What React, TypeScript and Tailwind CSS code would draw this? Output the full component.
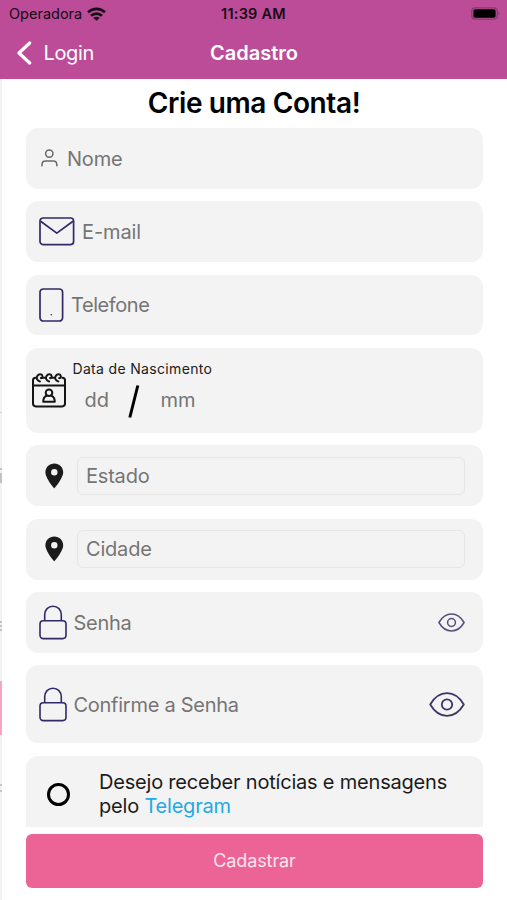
import type { ReactNode } from "react";

const NAVY = "#302a68";

function Wifi() {
  return (
    <svg width="19" height="14" viewBox="0 0 19 14" fill="none" stroke="#170b14" strokeWidth="2.6">
      <path d="M1 5.3C5.800.7 13.200.7 18 5.300" />
      <path d="M4 8.800c3.100-2.900 7.900-2.900 11 0" />
      <path d="M9.500 13.700 6.300 10.900c1.800-1.600 4.600-1.600 6.400 0Z" fill="#170b14" stroke="none" />
    </svg>
  );
}

function Battery() {
  return (
    <svg width="30" height="13" viewBox="0 0 30 13">
      <rect x="0.8" y="0.8" width="25.400" height="11.400" rx="3.400" fill="none" stroke="#843a6c" strokeWidth="1.300" />
      <rect x="2.400" y="2.300" width="22.200" height="8.400" rx="1.600" fill="#000" />
      <path d="M27.500 4.600c1.600.6 1.600 3.200 0 3.800Z" fill="#843a6c" />
    </svg>
  );
}

function Person() {
  return (
    <svg width="17" height="18" viewBox="0 0 17 18" fill="none" stroke="#6a6a6a" strokeWidth="1.500" strokeLinecap="round">
      <circle cx="8.300" cy="4.600" r="3.700" />
      <path d="M1 16.800v-1.300c0-2.200 1.400-3.500 3.600-3.500h7.600c2.200 0 3.600 1.300 3.600 3.500v1.300" />
    </svg>
  );
}

function Mail() {
  return (
    <svg width="36" height="29" viewBox="0 0 36 29" fill="none" stroke={NAVY} strokeWidth="1.700" strokeLinejoin="round">
      <rect x="1" y="1" width="33.600" height="26.600" rx="3" />
      <path d="m1.600 4.300 16.200 11.800L34 4.300" />
    </svg>
  );
}

function Phone() {
  return (
    <svg width="25" height="35" viewBox="0 0 25 35" fill="none" stroke={NAVY} strokeWidth="1.700">
      <rect x="1" y="1" width="22.600" height="32" rx="3.300" />
      <circle cx="12.300" cy="26.700" r=".8" fill={NAVY} stroke="none" />
    </svg>
  );
}

function Calendar() {
  return (
    <svg width="34" height="35" viewBox="0 0 34 35" fill="none" stroke="#151515" strokeWidth="2" strokeLinecap="round" strokeLinejoin="round">
      <path d="M4 4.800h-.4C2 4.800 1 5.800 1 7.400v23.200C1 32.400 2 33.400 3.800 33.400h26.400c1.800 0 2.800-1 2.800-2.800V7.400c0-1.600-1-2.600-2.600-2.600" />
      <path d="M1 12.500h32M10.300 4.800h3M19.500 4.800h3" />
      <path d="M8 8.400C4.800 7.800 4 5 5.400 2.900 6.800.7 10.200.8 10.500 3.300c.1 1.300-.7 2-1.700 1.800" />
      <path d="M17.200 8.400c-3.200-.6-4-3.400-2.600-5.500 1.400-2.200 4.800-2.100 5.100.4.1 1.300-.7 2-1.700 1.800" />
      <path d="M26.400 8.400c-3.200-.6-4-3.400-2.600-5.500 1.400-2.200 4.800-2.100 5.100.4.1 1.300-.7 2-1.700 1.800" />
      <circle cx="17" cy="19.700" r="3.300" />
      <path d="M14.800 22.500c-2.300 1-3.600 3.200-3.600 6.300h11.600c0-3.100-1.300-5.300-3.600-6.300" />
    </svg>
  );
}

function Pin() {
  return (
    <svg width="19" height="26" viewBox="0 0 19 26">
      <path fillRule="evenodd" fill="#1b1b1b" d="M9.300.4C4.300.4.400 4.200.400 9.200c0 6.100 8.900 16.300 8.900 16.300s8.900-10.200 8.900-16.300c0-5-3.900-8.800-8.900-8.800Zm0 5.600a3.200 3.200 0 1 1 0 6.400 3.200 3.200 0 0 1 0-6.400Z" />
    </svg>
  );
}

function Lock() {
  return (
    <svg width="28" height="35" viewBox="0 0 28 35" fill="none" stroke={NAVY} strokeWidth="1.600">
      <rect x="1" y="15.800" width="26" height="17.800" rx="3.300" />
      <path d="M5.700 15.800V9.800C5.700 4.800 9.200 1.200 14 1.200s8.300 3.600 8.300 8.600v6" />
    </svg>
  );
}

function Eye({ big }: { big?: boolean }) {
  return (
    <svg width={big ? 36 : 27} height={big ? 25 : 19} viewBox="0 0 36 25" fill="none" stroke={big ? "#3b3568" : "#554f7c"} strokeWidth={big ? 1.800 : 2} strokeLinejoin="round">
      <path d="M1.200 12.500C5.300 5.500 10.900 1.200 18 1.200s12.700 4.300 16.800 11.300C30.700 19.500 25.100 23.800 18 23.800S5.300 19.500 1.200 12.500Z" />
      <circle cx="18" cy="12.500" r="5.200" />
    </svg>
  );
}

function Card({ className, children }: { className: string; children: ReactNode }) {
  return <div className={`flex shrink-0 items-center rounded-[12px] bg-[#f3f3f3] ${className}`}>{children}</div>;
}

function Hint({ className, children }: { className: string; children: ReactNode }) {
  return <span className={`whitespace-nowrap text-[20px] leading-[24px] text-[#757575] ${className}`}>{children}</span>;
}

export default function App() {
  return (
    <div className="flex h-[900px] w-[507px] flex-col overflow-hidden bg-white font-['Inter','Liberation_Sans',sans-serif]">
      <header className="h-[79px] shrink-0 bg-[#bc4c98]">
        <div className="grid h-[27px] grid-cols-3 items-center px-[7px] text-[#170b14]">
          <div className="flex items-center gap-[5px] pl-[2px]">
            <span className="text-[14.500px] leading-[18px]">Operadora</span>
            <Wifi />
          </div>
          <span className="text-center text-[14.500px] font-semibold leading-[18px] tracking-[0.250px]">11:39 AM</span>
          <div className="-mr-px flex justify-end"><Battery /></div>
        </div>
        <div className="grid h-[51px] grid-cols-3 items-center px-[16px] text-white">
          <div className="flex items-center gap-[11.500px]">
            <svg width="16" height="24" viewBox="0 0 16 24" fill="none" stroke="white" strokeWidth="3.200" strokeLinecap="round" strokeLinejoin="round">
              <path d="M13.700 2 3 12l10.700 10" />
            </svg>
            <span className="text-[20px] leading-[26px] tracking-[-0.350px]">Login</span>
          </div>
          <span className="pl-px text-center text-[20px] font-semibold leading-[26px]">Cadastro</span>
        </div>
      </header>
      <div className="flex min-h-0 flex-1">
        <div className="flex w-[2px] shrink-0 flex-col bg-[#f2f2f2]">
          <div className="mt-[333px] h-px bg-[#d2d2d2]" />
          <div className="mt-[55px] h-[2px] bg-[#c2c2c2]" />
          <div className="mt-[3px] h-[10px] bg-[#c2c2c2]" />
          <div className="mt-[138px] h-[2px] bg-[#c2c2c2]" />
          <div className="mt-[2px] h-[2px] bg-[#c2c2c2]" />
          <div className="mt-[2px] h-[2px] bg-[#c2c2c2]" />
          <div className="mt-[50px] h-[54px] bg-[#f3a5c2]" />
          <div className="mt-[49px] h-[2px] bg-[#c8c8c8]" />
          <div className="mt-[4px] h-[2px] bg-[#c8c8c8]" />
        </div>
        <main className="flex min-w-0 flex-1 flex-col px-[24px]">
          <h1 className="h-[49px] shrink-0 pr-px pt-[8px] text-center text-[28px] font-semibold leading-[32px] tracking-[-0.380px] text-black">Crie uma Conta!</h1>
          <div className="flex h-[699px] shrink-0 flex-col gap-[12.400px] overflow-hidden">
            <Card className="h-[60.900px] gap-[9px] pl-[15px]"><Person /><Hint className="pt-px tracking-[-0.200px]">Nome</Hint></Card>
            <Card className="h-[60.900px] gap-[7px] pl-[13px]"><Mail /><Hint className="tracking-[-0.100px]">E-mail</Hint></Card>
            <Card className="h-[60.900px] gap-[7px] pl-[13px]"><Phone /><Hint className="tracking-[-0.420px]">Telefone</Hint></Card>
            <Card className="h-[85px] gap-[7px] pl-[5.500px]">
              <Calendar />
              <div className="flex h-full flex-col pt-[11px]">
                <span className="h-[20px] whitespace-nowrap text-[14px] leading-[20px] tracking-[0.330px] text-[#202020]">Data de Nascimento</span>
                <div className="flex items-center pl-[12px]">
                  <Hint className="w-[43px]">dd</Hint>
                  <svg width="12" height="42" viewBox="0 0 12 42" fill="none" stroke="black" strokeWidth="3"><path d="M1.800 38.500 9.800 6.500" /></svg>
                  <Hint className="ml-[21px]">mm</Hint>
                </div>
              </div>
            </Card>
            {["Estado", "Cidade"].map((name) => (
              <Card key={name} className="h-[61px] gap-[13px] pl-[19px] pr-[18px]">
                <Pin />
                <div className="flex h-[38px] flex-1 items-center rounded-[6px] border border-[#e6e6e6] pl-[8px]"><Hint className="pt-[0.600px] tracking-[-0.200px]">{name}</Hint></div>
              </Card>
            ))}
            <Card className="h-[61px] gap-[6.500px] pl-[13px] pr-[18.500px]"><Lock /><Hint className="flex-1 pt-px tracking-[-0.300px]">Senha</Hint><Eye /></Card>
            <Card className="h-[78px] gap-[6.500px] pl-[13px] pr-[18px]"><Lock /><Hint className="flex-1 pt-px tracking-[-0.270px]">Confirme a Senha</Hint><Eye big /></Card>
            <Card className="h-[86px] pb-[9px] pl-[20.500px]">
              <span className="mt-[1px] size-[23px] shrink-0 rounded-full border-[3px] border-black" />
              <p className="ml-[29.500px] whitespace-nowrap text-[20px] leading-[24px] tracking-[-0.200px] text-[#1b1b1b]">
                Desejo receber notícias e mensagens<br />pelo <span className="text-[#20aae6]">Telegram</span>
              </p>
            </Card>
          </div>
          <button className="mt-[7px] h-[54px] shrink-0 rounded-[6px] bg-[#ec6495] text-[18px] leading-[24px] tracking-[-0.100px] text-[#fde5ee]">Cadastrar</button>
        </main>
      </div>
    </div>
  );
}
